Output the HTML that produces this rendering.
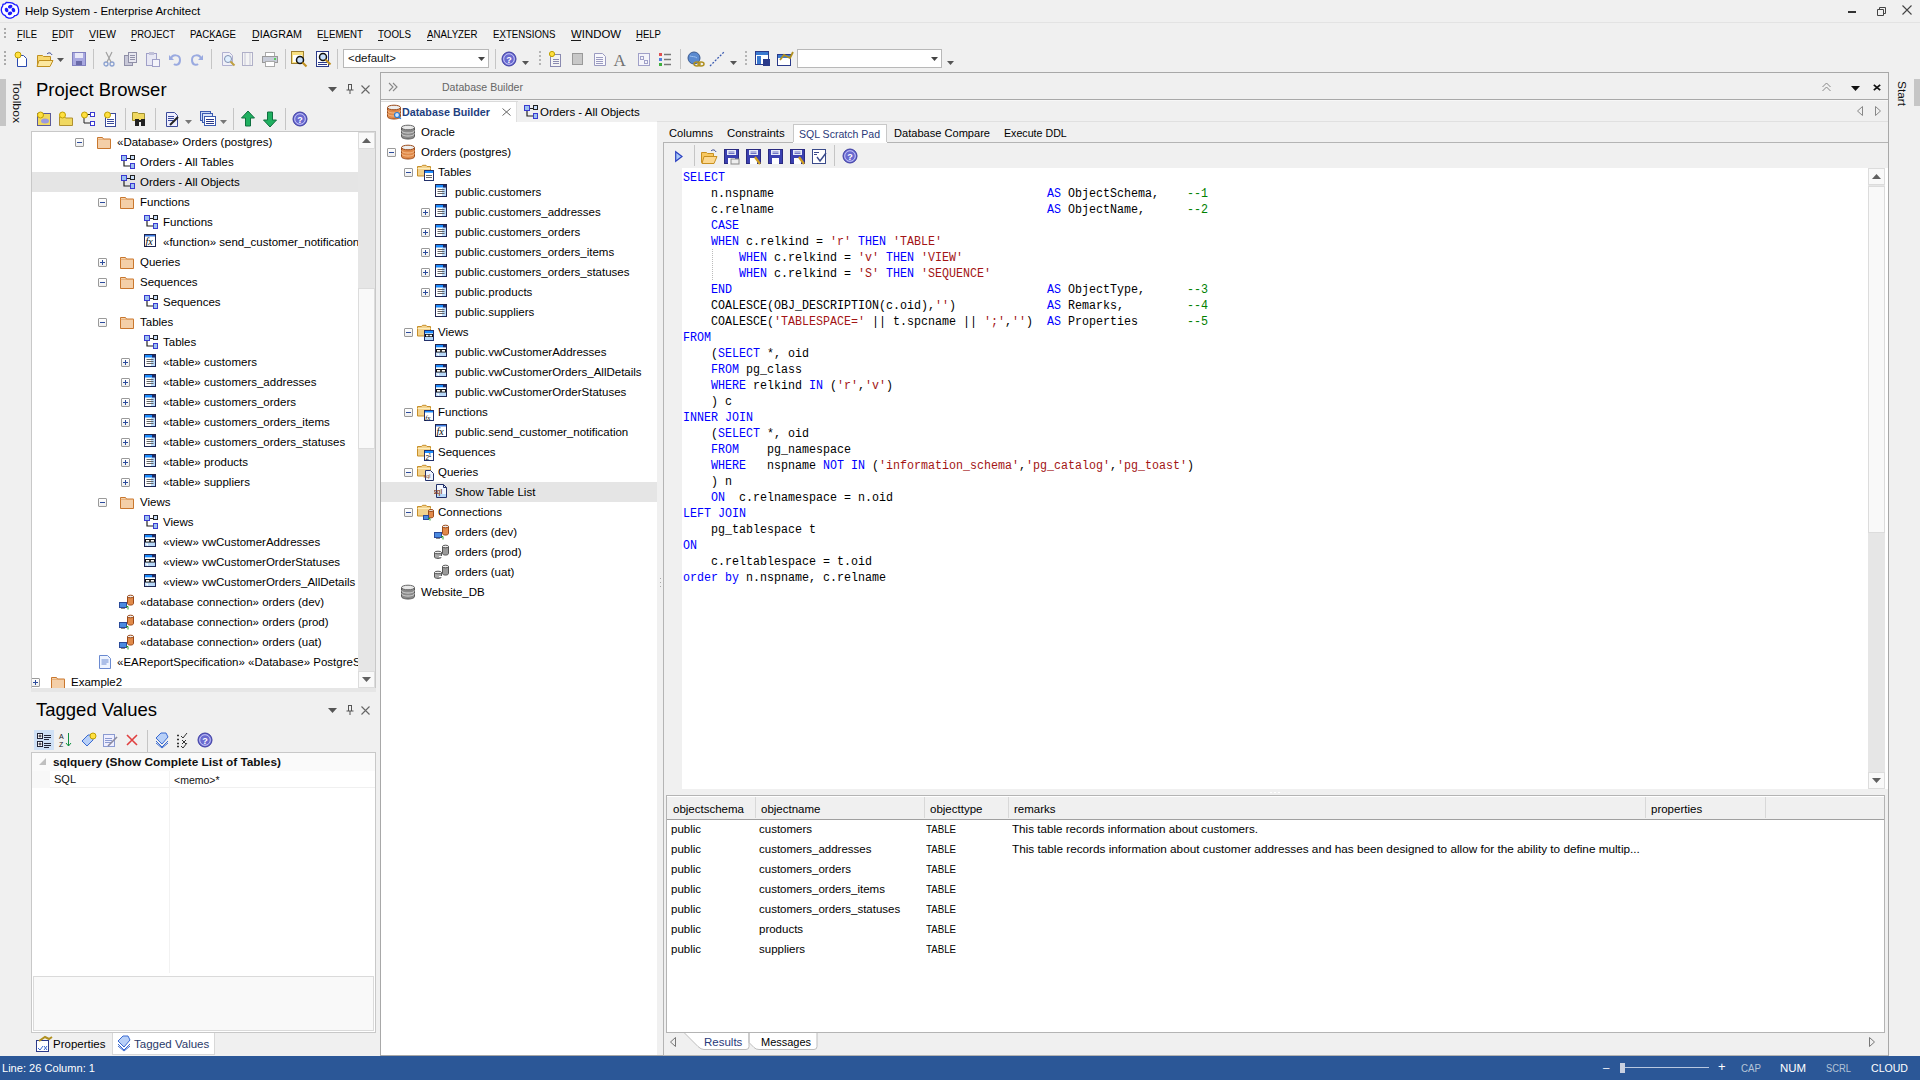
<!DOCTYPE html><html><head><meta charset="utf-8"><title>Help System - Enterprise Architect</title><style>
*{box-sizing:border-box;margin:0;padding:0}
html,body{width:1920px;height:1080px;overflow:hidden;background:#f0f0f0;font-family:"Liberation Sans",sans-serif;font-size:11.5px;color:#000}
.a{position:absolute}
.t{position:absolute;white-space:nowrap;line-height:14px}
svg.i{position:absolute;overflow:visible}
.code{position:absolute;font-family:"Liberation Mono",monospace;font-size:12.3px;line-height:16px;white-space:pre;color:#000;transform-origin:0 0;transform:scaleX(0.9485)}
.k{color:#0000ff}.s{color:#a31515}.c{color:#008000}
.ex{position:absolute;width:9px;height:9px;border:1px solid #9a9a9a;border-radius:1px;background:linear-gradient(#fff,#eee)}
.ex:before{content:"";position:absolute;left:1px;top:3px;width:5px;height:1px;background:#2c4c9c}
.ex.p:after{content:"";position:absolute;left:3px;top:1px;width:1px;height:5px;background:#2c4c9c}
</style></head><body><svg width="0" height="0" style="position:absolute">
<defs>
<symbol id="folder" viewBox="0 0 16 16"><path d="M1.5 3.5h5l1 1.5h7v9.5h-13z" fill="#f4cfa8" stroke="#c9772e"/><path d="M1.5 5.5h13" stroke="#e0a060" stroke-width="0.6"/></symbol>
<symbol id="diag" viewBox="0 0 16 16"><path d="M4 5v7h6M5 4.5h6" stroke="#222" fill="none" stroke-width="1.2"/><rect x="1.5" y="1.5" width="5" height="5" fill="#9cc0f0" stroke="#3a3ad0"/><rect x="10.5" y="1.5" width="4" height="4" fill="#c8dcf8" stroke="#222"/><rect x="10.5" y="9.5" width="4" height="5" fill="#9cc0f0" stroke="#3a3ad0"/></symbol>
<symbol id="table" viewBox="0 0 16 16"><rect x="1.5" y="0.5" width="11" height="12" fill="#fff" stroke="#1f2550"/><rect x="8" y="4" width="4" height="8" fill="#b8d8f8"/><rect x="2" y="1" width="10" height="2.5" fill="#1a8cff"/><rect x="9" y="1" width="3" height="2.5" fill="#1a2a6a"/><path d="M3.5 5.5h7M3.5 7.5h7M3.5 9.5h7" stroke="#666"/></symbol>
<symbol id="view" viewBox="0 0 16 16"><rect x="1.5" y="0.5" width="11" height="12" fill="#b8d8f8" stroke="#1f2550"/><rect x="2" y="1" width="10" height="2.5" fill="#1a8cff"/><rect x="9" y="1" width="3" height="2.5" fill="#1a2a6a"/><rect x="2" y="3.5" width="10" height="2" fill="#fff"/><rect x="2" y="5" width="10" height="3.5" fill="#111"/><rect x="3" y="6" width="3.2" height="1.6" fill="#fff"/><rect x="7.8" y="6" width="3.2" height="1.6" fill="#fff"/><path d="M2 9.5l3 2.5v-2.5z" fill="#fff"/></symbol>
<symbol id="fx" viewBox="0 0 16 16"><rect x="1.5" y="0.5" width="11" height="12" fill="#fff" stroke="#1f2550"/><rect x="2" y="1" width="10" height="1.5" fill="#3a7ae0"/><text x="2.5" y="11" font-family="Liberation Serif" font-style="italic" font-size="10" fill="#000">fx</text></symbol>
<symbol id="dbgray" viewBox="0 0 16 16"><path d="M1.5 3.5v9c0 1.5 3 2.5 6.5 2.5s6.5-1 6.5-2.5v-9" fill="#8a8a8a" stroke="#555"/><path d="M1.5 6.5c0 1.5 3 2.5 6.5 2.5s6.5-1 6.5-2.5M1.5 9.5c0 1.5 3 2.5 6.5 2.5s6.5-1 6.5-2.5" fill="none" stroke="#d8d8d8"/><ellipse cx="8" cy="3.5" rx="6.5" ry="2.3" fill="#e8e8e8" stroke="#666"/></symbol>
<symbol id="dborange" viewBox="0 0 16 16"><path d="M1.5 3.5v9c0 1.5 3 2.5 6.5 2.5s6.5-1 6.5-2.5v-9" fill="#e08a4a" stroke="#9a4a1a"/><path d="M1.5 6.5c0 1.5 3 2.5 6.5 2.5s6.5-1 6.5-2.5M1.5 9.5c0 1.5 3 2.5 6.5 2.5s6.5-1 6.5-2.5" fill="none" stroke="#f8c090"/><ellipse cx="8" cy="3.5" rx="6.5" ry="2.3" fill="#eee" stroke="#9a4a1a"/></symbol>
<symbol id="dbsearch" viewBox="0 0 16 16"><use href="#dborange"/><circle cx="11" cy="11" r="2.5" fill="#cfe6ff" stroke="#2a7ad0" stroke-width="1.2"/><path d="M12.8 12.8l2 2" stroke="#2a7ad0" stroke-width="1.5"/></symbol>
<symbol id="conn" viewBox="0 0 16 16"><path d="M8.5 2.5v7c0 1 1.6 1.6 3 1.6s3-.6 3-1.6v-7" fill="#e08a4a" stroke="#9a4a1a"/><ellipse cx="11.5" cy="2.5" rx="3" ry="1.3" fill="#eee" stroke="#9a4a1a"/><rect x="0.5" y="8.5" width="7" height="5" fill="#4a8ae0" stroke="#2a4a9a"/><path d="M2 14.5h4" stroke="#888"/><path d="M7 12.5h2v3" stroke="#2a9a2a" fill="none"/></symbol>
<symbol id="conngray" viewBox="0 0 16 16"><path d="M8.5 2.5v7c0 1 1.6 1.6 3 1.6s3-.6 3-1.6v-7" fill="#999" stroke="#555"/><ellipse cx="11.5" cy="2.5" rx="3" ry="1.3" fill="#eee" stroke="#555"/><path d="M0.5 8.5v4.5c0 .8 1.6 1.4 3.5 1.4s3.5-.6 3.5-1.4v-4.5" fill="#aaa" stroke="#555"/><ellipse cx="4" cy="8.5" rx="3.5" ry="1.3" fill="#eee" stroke="#555"/><path d="M5 12.5h3v3" stroke="#fff" fill="none"/></symbol>
<symbol id="doc" viewBox="0 0 16 16"><path d="M2.5 1.5h8l3 3v10h-11z" fill="#eef4ff" stroke="#6a8ad0"/><path d="M4.5 6h7M4.5 8h7M4.5 10h5" stroke="#6a8ad0"/></symbol>
<symbol id="fold2" viewBox="0 0 20 20"><path d="M1.5 2.5h4l1 -1.2h3.5l1 1.2h3.5v9.5h-13z" fill="#f2d28e" stroke="#c8902a"/><path d="M1.5 4.5h13" stroke="#fff4c8" stroke-width="0.8"/></symbol>
<symbol id="ov_tbl" viewBox="0 0 20 20"><rect x="8.5" y="6.5" width="9" height="10" fill="#fff" stroke="#22306a"/><rect x="9" y="7" width="8" height="2" fill="#1a8cff"/><path d="M10 11.5h6M10 13.5h6" stroke="#666"/></symbol>
<symbol id="ov_view" viewBox="0 0 20 20"><rect x="8.5" y="6.5" width="9" height="10" fill="#b8d8f8" stroke="#22306a"/><rect x="9" y="7" width="8" height="2" fill="#1a8cff"/><rect x="9" y="10" width="8" height="3" fill="#111"/><rect x="10" y="10.8" width="2.5" height="1.5" fill="#fff"/><rect x="13.5" y="10.8" width="2.5" height="1.5" fill="#fff"/></symbol>
<symbol id="ov_fx" viewBox="0 0 20 20"><rect x="8.5" y="6.5" width="9" height="10" fill="#fff" stroke="#22306a"/><rect x="9" y="7" width="8" height="1.5" fill="#1a8cff"/><text x="9.3" y="15.5" font-family="Liberation Serif" font-style="italic" font-size="7" fill="#000">fx</text></symbol>
<symbol id="ov_seq" viewBox="0 0 20 20"><rect x="8.5" y="6.5" width="9" height="10" fill="#fff" stroke="#22306a"/><rect x="9" y="7" width="8" height="2" fill="#1a8cff"/><text x="9.5" y="15.5" font-family="Liberation Sans" font-size="6.5" fill="#111">2</text><text x="12.5" y="13" font-family="Liberation Sans" font-size="5" fill="#111">1</text></symbol>
<symbol id="ov_sql" viewBox="0 0 20 20"><path d="M9.5 6.5h5l3 3v7h-8z" fill="#eef4ff" stroke="#22306a"/><text x="7.5" y="14" font-family="Liberation Sans" font-size="5.5" fill="#8a4a1a">sql</text></symbol>
<symbol id="ov_conn" viewBox="0 0 20 20"><path d="M12.5 6.5v6c0 .8 1.3 1.3 2.5 1.3s2.5-.5 2.5-1.3v-6" fill="#e08a4a" stroke="#9a4a1a"/><ellipse cx="15" cy="6.5" rx="2.5" ry="1" fill="#eee" stroke="#9a4a1a"/><rect x="7.5" y="11.5" width="5" height="4" fill="#4a8ae0" stroke="#2a4a9a"/><path d="M12 14.5h2v2" stroke="#2a9a2a" fill="none"/></symbol>
<symbol id="sqlq" viewBox="0 0 16 16"><path d="M2.5 0.5h7l3 3v10h-10z" fill="#f4f8ff" stroke="#22306a"/><path d="M9.5 0.5v3h3" fill="none" stroke="#22306a"/><rect x="3" y="10" width="9" height="3" fill="#b8d8f8"/><text x="-1" y="10" font-family="Liberation Sans" font-size="6.5" font-weight="bold" fill="#8a4a1a">sql</text></symbol>
<symbol id="help" viewBox="0 0 16 16"><circle cx="8" cy="8" r="7" fill="#6a6ad0" stroke="#3a3aa0"/><circle cx="8" cy="8" r="5.3" fill="none" stroke="#c8c8f8"/><text x="5.2" y="11.5" font-family="Liberation Sans" font-size="9" font-weight="bold" fill="#fff">?</text></symbol>
</defs></svg><svg class="i" style="left:0px;top:0px" width="22" height="22" viewBox="0 0 22 22"><path d="M10 2.6l2.6.6 2.2 1.4 1.9.5 1.2 1.9.7 2.5v2.2l-.6 2.2-1.6 1.4-1.6.4-1.6 1.6-2.3.8h-2.2l-2.4-.9-1.1-1.6-2-1-1.3-2-.6-2.4.3-2.4 1-1.6.4-1.8 2-.4 1.3-1.5z" fill="#fff" stroke="#1a1aff" stroke-width="1.3"/><g fill="#1a1aff"><ellipse cx="10.2" cy="6.6" rx="2.3" ry="1.8" transform="rotate(-20 10.2 6.6)"/><ellipse cx="13.4" cy="10" rx="1.8" ry="2.3" transform="rotate(-20 13.4 10)"/><ellipse cx="10" cy="13.4" rx="2.3" ry="1.8" transform="rotate(-20 10 13.4)"/><ellipse cx="6.6" cy="10" rx="1.8" ry="2.3" transform="rotate(-20 6.6 10)"/></g></svg><div class="t" style="left:25px;top:4px;font-size:11.5px;color:#000;">Help System - Enterprise Architect</div><div class="a" style="left:1848px;top:11px;width:8px;height:1.5px;background:#333"></div><svg class="i" style="left:1875px;top:5px" width="12" height="12"><path d="M2.5 4.5h6v6h-6zM4.5 4.5v-2h6v6h-2" fill="none" stroke="#444"/></svg><svg class="i" style="left:1902px;top:5px" width="10" height="10"><path d="M0.5 0.5l9 9M9.5 0.5l-9 9" stroke="#444" stroke-width="1.1"/></svg><div class="a" style="left:0px;top:22px;width:1920px;height:1px;background:#e3e3e3"></div><div class="a" style="left:4px;top:28px;width:2px;height:12px;background:repeating-linear-gradient(#aaa 0 2px,transparent 2px 4px)"></div><div class="t" style="left:17px;top:27px;font-size:11.5px;color:#000;transform-origin:0 0;transform:scaleX(0.824);">FILE</div><div class="a" style="left:17px;top:40px;width:5px;height:1px;background:#1a1a1a"></div><div class="t" style="left:52px;top:27px;font-size:11.5px;color:#000;transform-origin:0 0;transform:scaleX(0.840);">EDIT</div><div class="a" style="left:52px;top:40px;width:5px;height:1px;background:#1a1a1a"></div><div class="t" style="left:89px;top:27px;font-size:11.5px;color:#000;transform-origin:0 0;transform:scaleX(0.919);">VIEW</div><div class="a" style="left:89px;top:40px;width:6px;height:1px;background:#1a1a1a"></div><div class="t" style="left:131px;top:27px;font-size:11.5px;color:#000;transform-origin:0 0;transform:scaleX(0.820);">PROJECT</div><div class="a" style="left:131px;top:40px;width:5px;height:1px;background:#1a1a1a"></div><div class="t" style="left:190px;top:27px;font-size:11.5px;color:#000;transform-origin:0 0;transform:scaleX(0.840);">PACKAGE</div><div class="a" style="left:209px;top:40px;width:5px;height:1px;background:#1a1a1a"></div><div class="t" style="left:252px;top:27px;font-size:11.5px;color:#000;transform-origin:0 0;transform:scaleX(0.932);">DIAGRAM</div><div class="a" style="left:252px;top:40px;width:7px;height:1px;background:#1a1a1a"></div><div class="t" style="left:317px;top:27px;font-size:11.5px;color:#000;transform-origin:0 0;transform:scaleX(0.847);">ELEMENT</div><div class="a" style="left:323px;top:40px;width:5px;height:1px;background:#1a1a1a"></div><div class="t" style="left:378px;top:27px;font-size:11.5px;color:#000;transform-origin:0 0;transform:scaleX(0.851);">TOOLS</div><div class="a" style="left:378px;top:40px;width:5px;height:1px;background:#1a1a1a"></div><div class="t" style="left:427px;top:27px;font-size:11.5px;color:#000;transform-origin:0 0;transform:scaleX(0.844);">ANALYZER</div><div class="a" style="left:427px;top:40px;width:5px;height:1px;background:#1a1a1a"></div><div class="t" style="left:493px;top:27px;font-size:11.5px;color:#000;transform-origin:0 0;transform:scaleX(0.843);">EXTENSIONS</div><div class="a" style="left:499px;top:40px;width:5px;height:1px;background:#1a1a1a"></div><div class="t" style="left:571px;top:27px;font-size:11.5px;color:#000;transform-origin:0 0;transform:scaleX(0.991);">WINDOW</div><div class="a" style="left:571px;top:40px;width:10px;height:1px;background:#1a1a1a"></div><div class="t" style="left:636px;top:27px;font-size:11.5px;color:#000;transform-origin:0 0;transform:scaleX(0.832);">HELP</div><div class="a" style="left:636px;top:40px;width:6px;height:1px;background:#1a1a1a"></div><div class="a" style="left:4px;top:51px;width:2px;height:16px;background:repeating-linear-gradient(#aaa 0 2px,transparent 2px 4px)"></div><svg class="i" style="left:13px;top:51px" width="16" height="16" viewBox="0 0 16 16"><path d="M4.5 4.5h6l3 3v8h-9z" fill="#fff" stroke="#2a4ab0"/><circle cx="5" cy="4" r="3" fill="#ffe040" stroke="#c0a000"/></svg><svg class="i" style="left:36px;top:51px" width="18" height="16" viewBox="0 0 18 16"><path d="M1.5 4.5h5l1 1h7v9h-13z" fill="#f8d870" stroke="#c09020"/><path d="M3 9.5h14l-3 6h-13z" fill="#fce8a0" stroke="#c09020"/><path d="M11 3c2-2 4-1 5 1" stroke="#2a3a8a" fill="none"/></svg><svg class="i" style="left:57px;top:58px" width="7" height="4" viewBox="0 0 7 4"><path d="M0 0h7l-3.5 4z" fill="#555"/></svg><svg class="i" style="left:71px;top:51px" width="16" height="16" viewBox="0 0 16 16"><rect x="1.5" y="1.5" width="13" height="13" fill="#a8a8e0" stroke="#8080c0"/><rect x="4" y="2" width="8" height="5" fill="#e8e8f8"/><rect x="5" y="10" width="6" height="4" fill="#6a6aa8"/></svg><div class="a" style="left:93px;top:49px;width:1px;height:20px;background:#c5c5c5"></div><svg class="i" style="left:103px;top:51px" width="12" height="16" viewBox="0 0 12 16"><circle cx="3" cy="13" r="2" fill="none" stroke="#8aa0d0" stroke-width="1.3"/><circle cx="9" cy="13" r="2" fill="none" stroke="#8aa0d0" stroke-width="1.3"/><path d="M4 11l5-10M8 11l-5-10" stroke="#a0a0a0" stroke-width="1.2"/></svg><svg class="i" style="left:123px;top:51px" width="15" height="16" viewBox="0 0 15 16"><rect x="1.5" y="4.5" width="8" height="10" fill="#c8c8d8" stroke="#9090a8"/><rect x="5.5" y="1.5" width="8" height="10" fill="#e8e8f0" stroke="#9090a8"/><path d="M7 4.5h5M7 6.5h5M7 8.5h5" stroke="#9090a8"/></svg><svg class="i" style="left:145px;top:51px" width="16" height="16" viewBox="0 0 16 16"><rect x="1.5" y="2.5" width="10" height="12" fill="#e8e8f4" stroke="#a0a0c8"/><rect x="4" y="1" width="5" height="3" fill="#c0c0d8"/><rect x="7.5" y="8.5" width="7" height="7" fill="#f4f4fa" stroke="#a0a0c8"/></svg><svg class="i" style="left:168px;top:51px" width="14" height="16" viewBox="0 0 14 16"><path d="M3 8c1-5 9-5 9 1s-5 5-6 4" fill="none" stroke="#9aaae0" stroke-width="2"/><path d="M1 4v5h5z" fill="#9aaae0"/></svg><svg class="i" style="left:190px;top:51px" width="14" height="16" viewBox="0 0 14 16"><path d="M11 8c-1-5-9-5-9 1s5 5 6 4" fill="none" stroke="#9aaae0" stroke-width="2"/><path d="M13 4v5h-5z" fill="#9aaae0"/></svg><div class="a" style="left:211px;top:49px;width:1px;height:20px;background:#c5c5c5"></div><svg class="i" style="left:220px;top:51px" width="16" height="16" viewBox="0 0 16 16"><path d="M2.5 1.5h7l3 3v10h-10z" fill="#f0f0f8" stroke="#b0b0d0"/><circle cx="8" cy="8" r="3.5" fill="#e0f0ff" stroke="#8090b0"/><path d="M10.5 10.5l4 4" stroke="#c0a040" stroke-width="2"/></svg><svg class="i" style="left:241px;top:51px" width="13" height="16" viewBox="0 0 13 16"><rect x="1.5" y="1.5" width="10" height="13" fill="#f4f4f4" stroke="#b0b0c8"/><path d="M4 2v12M9 2v12" stroke="#c8c8d8"/></svg><svg class="i" style="left:261px;top:51px" width="18" height="16" viewBox="0 0 18 16"><rect x="4.5" y="1.5" width="9" height="5" fill="#fff" stroke="#aaa"/><rect x="1.5" y="5.5" width="15" height="6" fill="#c8ccd8" stroke="#999"/><rect x="4.5" y="10.5" width="9" height="5" fill="#fff" stroke="#aaa"/><circle cx="14" cy="8" r="1" fill="#3c3"/></svg><div class="a" style="left:285px;top:49px;width:1px;height:20px;background:#c5c5c5"></div><svg class="i" style="left:291px;top:51px" width="17" height="16" viewBox="0 0 17 16"><rect x="0.5" y="0.5" width="12" height="12" fill="#f8e080" stroke="#a08030"/><rect x="2" y="4" width="9" height="7" fill="#fff"/><circle cx="9" cy="9" r="3.5" fill="#c8e0ff" stroke="#111" stroke-width="1.5"/><path d="M11.5 11.5l4 4" stroke="#c09020" stroke-width="2.2"/></svg><svg class="i" style="left:316px;top:51px" width="16" height="16" viewBox="0 0 16 16"><rect x="0.5" y="0.5" width="12" height="15" fill="#fff" stroke="#2a3a8a"/><path d="M2 11.5h9M2 13.5h9" stroke="#2a3a8a"/><circle cx="7" cy="6" r="3.5" fill="#c8e0ff" stroke="#111" stroke-width="1.5"/><path d="M9.5 8.5l5 5" stroke="#c09020" stroke-width="2.2"/></svg><div class="a" style="left:337px;top:49px;width:1px;height:20px;background:#c5c5c5"></div><div class="a" style="left:343px;top:49px;width:146px;height:19px;background:#fff;border:1px solid #b8b8b8"></div><div class="t" style="left:348px;top:51px;font-size:11.5px;color:#111;">&lt;default&gt;</div><svg class="i" style="left:478px;top:57px" width="7" height="4" viewBox="0 0 7 4"><path d="M0 0h7l-3.5 4z" fill="#444"/></svg><div class="a" style="left:495px;top:49px;width:1px;height:20px;background:#c5c5c5"></div><svg class="i" style="left:501px;top:51px" width="16" height="16"><use href="#help"/></svg><svg class="i" style="left:522px;top:61px" width="7" height="4" viewBox="0 0 7 4"><path d="M0 0h7l-3.5 4z" fill="#555"/></svg><div class="a" style="left:539px;top:51px;width:2px;height:16px;background:repeating-linear-gradient(#b5b5b5 0 2px,transparent 2px 4px)"></div><svg class="i" style="left:548px;top:51px" width="14" height="16" viewBox="0 0 14 16"><rect x="2.5" y="3.5" width="10" height="12" fill="#f4f4f4" stroke="#8a8ab0"/><path d="M5 8.5h6M5 10.5h6M5 12.5h6" stroke="#8a8ab0"/><circle cx="4" cy="3" r="2.6" fill="#ffe040" stroke="#c0a000"/></svg><svg class="i" style="left:571px;top:51px" width="13" height="16" viewBox="0 0 13 16"><rect x="1.5" y="2.5" width="10" height="11" fill="#c8c8c8" stroke="#999"/></svg><svg class="i" style="left:593px;top:51px" width="14" height="16" viewBox="0 0 14 16"><path d="M1.5 2.5h8l3 3v9h-11z" fill="#f8f8fc" stroke="#9a9ac0"/><path d="M3 6.5h7M3 8.5h7M3 10.5h7M3 12.5h7" stroke="#9a9ac0"/></svg><svg class="i" style="left:613px;top:51px" width="16" height="16" viewBox="0 0 16 16"><text x="0.5" y="14.5" font-family="Liberation Serif" font-size="17" fill="#707070">A</text></svg><svg class="i" style="left:637px;top:51px" width="14" height="16" viewBox="0 0 14 16"><rect x="1.5" y="2.5" width="11" height="12" fill="#f4f4fa" stroke="#a0a0c8"/><rect x="3.5" y="5.5" width="3" height="3" fill="none" stroke="#a0a0c8"/><rect x="7.5" y="9.5" width="3" height="3" fill="none" stroke="#a0a0c8"/></svg><svg class="i" style="left:658px;top:51px" width="14" height="16" viewBox="0 0 14 16"><rect x="1" y="2" width="3" height="3" fill="#e05050"/><rect x="1" y="7" width="3" height="3" fill="#5080e0"/><rect x="1" y="12" width="3" height="3" fill="#40b040"/><path d="M6 3.5h7M6 8.5h7M6 13.5h7" stroke="#777" stroke-width="1.5"/></svg><div class="a" style="left:680px;top:49px;width:1px;height:20px;background:#c5c5c5"></div><svg class="i" style="left:687px;top:51px" width="17" height="16" viewBox="0 0 17 16"><circle cx="7" cy="7" r="6" fill="#5a8ad0" stroke="#3a5a90"/><path d="M3 5c2 1 5 0 7 2" stroke="#9ac0f0" fill="none"/><ellipse cx="10" cy="13" rx="3" ry="2" fill="none" stroke="#b09020" stroke-width="1.5"/><ellipse cx="14" cy="13" rx="3" ry="2" fill="none" stroke="#b09020" stroke-width="1.5"/></svg><svg class="i" style="left:709px;top:51px" width="16" height="16" viewBox="0 0 16 16"><path d="M1 15L15 1" stroke="#3a5ab0" stroke-width="1.3" stroke-dasharray="2 1.5"/></svg><svg class="i" style="left:730px;top:61px" width="7" height="4" viewBox="0 0 7 4"><path d="M0 0h7l-3.5 4z" fill="#555"/></svg><div class="a" style="left:745px;top:51px;width:2px;height:16px;background:repeating-linear-gradient(#b5b5b5 0 2px,transparent 2px 4px)"></div><svg class="i" style="left:755px;top:51px" width="16" height="16" viewBox="0 0 16 16"><rect x="0.5" y="0.5" width="13" height="13" fill="#fff" stroke="#2a3a8a"/><rect x="1" y="1" width="12" height="3" fill="#3a7ad0"/><rect x="2" y="5" width="4" height="8" fill="#3a7ad0"/><rect x="8" y="8" width="7" height="7" fill="#2a3a8a"/></svg><svg class="i" style="left:777px;top:51px" width="17" height="16" viewBox="0 0 17 16"><rect x="0.5" y="3.5" width="13" height="11" fill="#fff" stroke="#2a3a8a"/><rect x="1" y="4" width="12" height="3" fill="#3a7ad0"/><path d="M3 9l4-5 6 3 3-6" stroke="#b09020" stroke-width="1.8" fill="none"/></svg><div class="a" style="left:797px;top:49px;width:145px;height:19px;background:#fff;border:1px solid #b8b8b8"></div><svg class="i" style="left:931px;top:57px" width="7" height="4" viewBox="0 0 7 4"><path d="M0 0h7l-3.5 4z" fill="#444"/></svg><svg class="i" style="left:947px;top:61px" width="7" height="4" viewBox="0 0 7 4"><path d="M0 0h7l-3.5 4z" fill="#555"/></svg><div class="a" style="left:0px;top:79px;width:6px;height:47px;background:#c6c6c6"></div><div class="t" style="left:10px;top:81px;transform-origin:0 0;transform:translate(14px,0) rotate(90deg) scaleX(1.060);font-size:11.5px;color:#111">Toolbox</div><div class="t" style="left:36px;top:80px;font-size:18.5px;line-height:20px;color:#000;">Project Browser</div><svg class="i" style="left:328px;top:87px" width="9" height="5" viewBox="0 0 9 5"><path d="M0 0h9l-4.5 5z" fill="#555"/></svg><svg class="i" style="left:346px;top:84px" width="8" height="10" viewBox="0 0 8 10"><path d="M2 0.5h4M2.5 1v5M5.5 1v5M0.5 6h7M4 6v4" stroke="#555" fill="none"/></svg><svg class="i" style="left:361px;top:85px" width="9" height="9" viewBox="0 0 9 9"><path d="M0.5 0.5l8 8M8.5 0.5l-8 8" stroke="#666" stroke-width="1.1"/></svg><svg class="i" style="left:36px;top:111px" width="16" height="16" viewBox="0 0 16 16"><rect x="1.5" y="2.5" width="13" height="12" fill="#f0d860" stroke="#5a5a9a"/><ellipse cx="9" cy="10" rx="4" ry="2.5" fill="#9a9ae0"/><circle cx="4.5" cy="4" r="3" fill="#ffe040" stroke="#c0a000"/></svg><svg class="i" style="left:58px;top:111px" width="16" height="16" viewBox="0 0 16 16"><path d="M1.5 5.5h5l1 1.5h7v7.5h-13z" fill="#f0d860" stroke="#b09030"/><circle cx="4.5" cy="4" r="3" fill="#ffe040" stroke="#c0a000"/></svg><svg class="i" style="left:80px;top:111px" width="16" height="16" viewBox="0 0 16 16"><path d="M4 5v7h7M7 3.5h4" stroke="#222" fill="none"/><rect x="10.5" y="1.5" width="4" height="4" fill="#fff" stroke="#3a3ad0"/><rect x="10.5" y="10.5" width="4" height="4" fill="#fff" stroke="#3a3ad0"/><circle cx="4.5" cy="4" r="3" fill="#ffe040" stroke="#c0a000"/></svg><svg class="i" style="left:103px;top:111px" width="14" height="16" viewBox="0 0 14 16"><rect x="2.5" y="2.5" width="10" height="13" fill="#fff" stroke="#3a4a9a"/><path d="M4 8.5h7M4 10.5h7M4 12.5h7" stroke="#3a4a9a" stroke-width="1.2"/><circle cx="4.5" cy="4" r="3" fill="#ffe040" stroke="#c0a000"/></svg><div class="a" style="left:125px;top:108px;width:1px;height:22px;background:#c5c5c5"></div><svg class="i" style="left:132px;top:111px" width="16" height="16" viewBox="0 0 16 16"><path d="M0.5 1.5h5l1 1h6v7h-12z" fill="#f0d860" stroke="#a09030"/><rect x="3" y="8" width="4" height="7" fill="#222"/><rect x="9" y="8" width="4" height="7" fill="#222"/><rect x="6" y="9" width="4" height="2" fill="#222"/></svg><div class="a" style="left:155px;top:108px;width:1px;height:22px;background:#c5c5c5"></div><svg class="i" style="left:165px;top:111px" width="15" height="16" viewBox="0 0 15 16"><path d="M1.5 1.5h8l3 3v11h-11z" fill="#eef" stroke="#3a4a9a"/><path d="M3 5.5h6M3 7.5h6M3 9.5h5" stroke="#3a4a9a"/><path d="M5 14l8-8" stroke="#222" stroke-width="2"/></svg><svg class="i" style="left:185px;top:120px" width="7" height="4" viewBox="0 0 7 4"><path d="M0 0h7l-3.5 4z" fill="#777"/></svg><svg class="i" style="left:200px;top:111px" width="16" height="16" viewBox="0 0 16 16"><rect x="0.5" y="0.5" width="10" height="9" fill="#c8d8f8" stroke="#3a5ab0"/><rect x="2.5" y="2.5" width="10" height="9" fill="#d8e4f8" stroke="#3a5ab0"/><rect x="4.5" y="5.5" width="11" height="9" fill="#fff" stroke="#3a5ab0"/><path d="M6 8.5h8M6 10.5h8M6 12.5h8" stroke="#2a3a8a" stroke-width="1.2"/></svg><svg class="i" style="left:220px;top:120px" width="7" height="4" viewBox="0 0 7 4"><path d="M0 0h7l-3.5 4z" fill="#777"/></svg><div class="a" style="left:233px;top:108px;width:1px;height:22px;background:#c5c5c5"></div><svg class="i" style="left:241px;top:111px" width="14" height="16" viewBox="0 0 14 16"><path d="M7 0l6.5 7h-4v8h-5v-8h-4z" fill="#20b060" stroke="#107040"/></svg><svg class="i" style="left:263px;top:111px" width="14" height="16" viewBox="0 0 14 16"><path d="M7 16l6.5-7h-4v-8h-5v8h-4z" fill="#20b060" stroke="#107040"/></svg><div class="a" style="left:285px;top:108px;width:1px;height:22px;background:#c5c5c5"></div><svg class="i" style="left:292px;top:111px" width="16" height="16"><use href="#help"/></svg><div class="a" style="left:31px;top:131px;width:345px;height:558px;background:#fff;border:1px solid #c8c8c8"></div><div class="a" style="left:32px;top:172px;width:326px;height:20px;background:#e5e5e5"></div><div class="a" style="left:358px;top:132px;width:17px;height:556px;background:#e6e6e6"></div><div class="a" style="left:358px;top:132px;width:17px;height:17px;background:#f9f9f9;border:1px solid #dcdcdc"></div><svg class="i" style="left:362px;top:138px" width="9" height="5" viewBox="0 0 9 5"><path d="M0 5l4.5-5 4.5 5z" fill="#606060"/></svg><div class="a" style="left:358px;top:288px;width:17px;height:161px;background:#f9f9f9;border:1px solid #dcdcdc"></div><div class="a" style="left:358px;top:671px;width:17px;height:17px;background:#f9f9f9;border:1px solid #dcdcdc"></div><svg class="i" style="left:362px;top:677px" width="9" height="5" viewBox="0 0 9 5"><path d="M0 0h9l-4.5 5z" fill="#606060"/></svg><div class="a" style="left:31px;top:688px;width:345px;height:4px;background:#e6e6e6"></div><div class="a" style="left:32px;top:132px;width:326px;height:556px;overflow:hidden"><div class="ex" style="left:43px;top:6px"></div><svg class="i" style="left:64px;top:2px" width="16" height="16"><use href="#folder"/></svg><div class="t" style="left:85px;top:3px;font-size:11.5px;color:#000;">«Database» Orders (postgres)</div><svg class="i" style="left:88px;top:22px" width="16" height="16"><use href="#diag"/></svg><div class="t" style="left:108px;top:23px;font-size:11.5px;color:#000;">Orders - All Tables</div><svg class="i" style="left:88px;top:42px" width="16" height="16"><use href="#diag"/></svg><div class="t" style="left:108px;top:43px;font-size:11.5px;color:#000;">Orders - All Objects</div><div class="ex" style="left:66px;top:66px"></div><svg class="i" style="left:87px;top:62px" width="16" height="16"><use href="#folder"/></svg><div class="t" style="left:108px;top:63px;font-size:11.5px;color:#000;">Functions</div><svg class="i" style="left:111px;top:82px" width="16" height="16"><use href="#diag"/></svg><div class="t" style="left:131px;top:83px;font-size:11.5px;color:#000;">Functions</div><svg class="i" style="left:111px;top:102px" width="16" height="16"><use href="#fx"/></svg><div class="t" style="left:131px;top:103px;font-size:11.5px;color:#000;">«function» send_customer_notification</div><div class="ex p" style="left:66px;top:126px"></div><svg class="i" style="left:87px;top:122px" width="16" height="16"><use href="#folder"/></svg><div class="t" style="left:108px;top:123px;font-size:11.5px;color:#000;">Queries</div><div class="ex" style="left:66px;top:146px"></div><svg class="i" style="left:87px;top:142px" width="16" height="16"><use href="#folder"/></svg><div class="t" style="left:108px;top:143px;font-size:11.5px;color:#000;">Sequences</div><svg class="i" style="left:111px;top:162px" width="16" height="16"><use href="#diag"/></svg><div class="t" style="left:131px;top:163px;font-size:11.5px;color:#000;">Sequences</div><div class="ex" style="left:66px;top:186px"></div><svg class="i" style="left:87px;top:182px" width="16" height="16"><use href="#folder"/></svg><div class="t" style="left:108px;top:183px;font-size:11.5px;color:#000;">Tables</div><svg class="i" style="left:111px;top:202px" width="16" height="16"><use href="#diag"/></svg><div class="t" style="left:131px;top:203px;font-size:11.5px;color:#000;">Tables</div><div class="ex p" style="left:89px;top:226px"></div><svg class="i" style="left:111px;top:222px" width="16" height="16"><use href="#table"/></svg><div class="t" style="left:131px;top:223px;font-size:11.5px;color:#000;">«table» customers</div><div class="ex p" style="left:89px;top:246px"></div><svg class="i" style="left:111px;top:242px" width="16" height="16"><use href="#table"/></svg><div class="t" style="left:131px;top:243px;font-size:11.5px;color:#000;">«table» customers_addresses</div><div class="ex p" style="left:89px;top:266px"></div><svg class="i" style="left:111px;top:262px" width="16" height="16"><use href="#table"/></svg><div class="t" style="left:131px;top:263px;font-size:11.5px;color:#000;">«table» customers_orders</div><div class="ex p" style="left:89px;top:286px"></div><svg class="i" style="left:111px;top:282px" width="16" height="16"><use href="#table"/></svg><div class="t" style="left:131px;top:283px;font-size:11.5px;color:#000;">«table» customers_orders_items</div><div class="ex p" style="left:89px;top:306px"></div><svg class="i" style="left:111px;top:302px" width="16" height="16"><use href="#table"/></svg><div class="t" style="left:131px;top:303px;font-size:11.5px;color:#000;">«table» customers_orders_statuses</div><div class="ex p" style="left:89px;top:326px"></div><svg class="i" style="left:111px;top:322px" width="16" height="16"><use href="#table"/></svg><div class="t" style="left:131px;top:323px;font-size:11.5px;color:#000;">«table» products</div><div class="ex p" style="left:89px;top:346px"></div><svg class="i" style="left:111px;top:342px" width="16" height="16"><use href="#table"/></svg><div class="t" style="left:131px;top:343px;font-size:11.5px;color:#000;">«table» suppliers</div><div class="ex" style="left:66px;top:366px"></div><svg class="i" style="left:87px;top:362px" width="16" height="16"><use href="#folder"/></svg><div class="t" style="left:108px;top:363px;font-size:11.5px;color:#000;">Views</div><svg class="i" style="left:111px;top:382px" width="16" height="16"><use href="#diag"/></svg><div class="t" style="left:131px;top:383px;font-size:11.5px;color:#000;">Views</div><svg class="i" style="left:111px;top:402px" width="16" height="16"><use href="#view"/></svg><div class="t" style="left:131px;top:403px;font-size:11.5px;color:#000;">«view» vwCustomerAddresses</div><svg class="i" style="left:111px;top:422px" width="16" height="16"><use href="#view"/></svg><div class="t" style="left:131px;top:423px;font-size:11.5px;color:#000;">«view» vwCustomerOrderStatuses</div><svg class="i" style="left:111px;top:442px" width="16" height="16"><use href="#view"/></svg><div class="t" style="left:131px;top:443px;font-size:11.5px;color:#000;">«view» vwCustomerOrders_AllDetails</div><svg class="i" style="left:87px;top:462px" width="16" height="16"><use href="#conn"/></svg><div class="t" style="left:108px;top:463px;font-size:11.5px;color:#000;">«database connection» orders (dev)</div><svg class="i" style="left:87px;top:482px" width="16" height="16"><use href="#conn"/></svg><div class="t" style="left:108px;top:483px;font-size:11.5px;color:#000;">«database connection» orders (prod)</div><svg class="i" style="left:87px;top:502px" width="16" height="16"><use href="#conn"/></svg><div class="t" style="left:108px;top:503px;font-size:11.5px;color:#000;">«database connection» orders (uat)</div><svg class="i" style="left:65px;top:522px" width="16" height="16"><use href="#doc"/></svg><div class="t" style="left:85px;top:523px;font-size:11.5px;color:#000;">«EAReportSpecification» «Database» PostgreSQL</div><div class="ex p" style="left:-1px;top:546px"></div><svg class="i" style="left:18px;top:542px" width="16" height="16"><use href="#folder"/></svg><div class="t" style="left:39px;top:543px;font-size:11.5px;color:#000;">Example2</div></div><div class="t" style="left:36px;top:700px;font-size:18.5px;line-height:20px;color:#000;">Tagged Values</div><svg class="i" style="left:328px;top:708px" width="9" height="5" viewBox="0 0 9 5"><path d="M0 0h9l-4.5 5z" fill="#555"/></svg><svg class="i" style="left:346px;top:705px" width="8" height="10" viewBox="0 0 8 10"><path d="M2 0.5h4M2.5 1v5M5.5 1v5M0.5 6h7M4 6v4" stroke="#555" fill="none"/></svg><svg class="i" style="left:361px;top:706px" width="9" height="9" viewBox="0 0 9 9"><path d="M0.5 0.5l8 8M8.5 0.5l-8 8" stroke="#666" stroke-width="1.1"/></svg><div class="a" style="left:34px;top:730px;width:20px;height:20px;background:#cfe0f5"></div><svg class="i" style="left:37px;top:732px" width="15" height="16" viewBox="0 0 15 16"><rect x="0.5" y="1.5" width="5" height="5" fill="#fff" stroke="#223"/><rect x="0.5" y="9.5" width="5" height="5" fill="#fff" stroke="#223"/><path d="M3 2.5v3M1.5 4h3M3 10.5v3M1.5 12h3" stroke="#223"/><path d="M7 3.5h7M7 5.5h7M7 11.5h7M7 13.5h7M7 7.5h5M7 15.5h5" stroke="#223"/></svg><svg class="i" style="left:59px;top:732px" width="13" height="16" viewBox="0 0 13 16"><text x="0" y="7" font-family="Liberation Sans" font-size="7" fill="#222">A</text><text x="0" y="15" font-family="Liberation Sans" font-size="7" fill="#222">Z</text><path d="M9.5 1v13M7 11l2.5 3 2.5-3" stroke="#109040" fill="none"/></svg><svg class="i" style="left:81px;top:732px" width="16" height="16" viewBox="0 0 16 16"><path d="M1 9l6-6h5v5l-6 6z" fill="#b8d0f8" stroke="#3a6ad0"/><circle cx="12" cy="4" r="3" fill="#ffe040" stroke="#c0a000"/></svg><svg class="i" style="left:102px;top:732px" width="16" height="16" viewBox="0 0 16 16"><rect x="1.5" y="2.5" width="11" height="12" fill="#eef" stroke="#8a9ad0"/><path d="M3 6.5h7M3 8.5h7M3 10.5h6" stroke="#8a9ad0"/><path d="M6 14l9-9" stroke="#8a8aa0" stroke-width="1.6"/></svg><svg class="i" style="left:125px;top:732px" width="14" height="16" viewBox="0 0 14 16"><path d="M2 3l10 10M12 3l-10 10" stroke="#e04040" stroke-width="1.6"/></svg><div class="a" style="left:147px;top:730px;width:1px;height:22px;background:#c5c5c5"></div><svg class="i" style="left:155px;top:732px" width="15" height="16" viewBox="0 0 15 16"><path d="M1 6l5-5h5l2 4-6 7z" fill="#b8d0f8" stroke="#3a6ad0"/><path d="M1 9l6 6 6-6M1 11l6 5 6-5" fill="none" stroke="#3a6ad0"/></svg><svg class="i" style="left:176px;top:732px" width="14" height="16" viewBox="0 0 14 16"><path d="M1 3.5h2M1 7.5h2M1 11.5h2M1 14.5h2" stroke="#333" stroke-width="1.5"/><path d="M5 4l2 2 4-5M6 8l4 4M10 8l-4 4M5 14l2 2 4-5" stroke="#333" fill="none"/></svg><svg class="i" style="left:197px;top:732px" width="16" height="16"><use href="#help"/></svg><div class="a" style="left:31px;top:752px;width:345px;height:281px;background:#fff;border:1px solid #c8c8c8"></div><div class="a" style="left:32px;top:753px;width:343px;height:18px;background:#fafafa"></div><svg class="i" style="left:38px;top:757px" width="9" height="9" viewBox="0 0 9 9"><path d="M8 1v7h-7z" fill="#c0c0c0"/></svg><div class="t" style="left:53px;top:755px;font-size:11.5px;font-weight:bold;color:#111;transform-origin:0 0;transform:scaleX(1.029);">sqlquery (Show Complete List of Tables)</div><div class="a" style="left:32px;top:771px;width:18px;height:17px;background:#f8f8f8"></div><div class="a" style="left:50px;top:787px;width:325px;height:1px;background:#f0f0f0"></div><div class="a" style="left:169px;top:771px;width:1px;height:202px;background:#f2f2f2"></div><div class="t" style="left:54px;top:772px;font-size:11px;color:#111;">SQL</div><div class="t" style="left:174px;top:773px;font-size:10.5px;color:#111;">&lt;memo&gt;*</div><div class="a" style="left:33px;top:976px;width:341px;height:55px;background:#f9f9f9;border:1px solid #dadada"></div><div class="a" style="left:112px;top:1033px;width:103px;height:22px;background:#fff;border:1px solid #d8d8d8;border-top:none"></div><svg class="i" style="left:35px;top:1036px" width="17" height="16" viewBox="0 0 17 16"><rect x="1.5" y="4.5" width="12" height="11" fill="#fff" stroke="#2a3a8a"/><path d="M3 12l2 2 3-4M9 10l3 4M12 10l-3 4" stroke="#3a6ad0" fill="none"/><path d="M4 5l6-4 4 2 3-2" stroke="#b09020" stroke-width="2" fill="none"/></svg><div class="t" style="left:53px;top:1037px;font-size:11.5px;color:#000;">Properties</div><svg class="i" style="left:117px;top:1035px" width="15" height="17" viewBox="0 0 15 17"><path d="M1 6l5-5h5l2 4-6 7z" fill="#b8d0f8" stroke="#3a6ad0"/><path d="M1 9l6 6 6-6M1 11l6 5 6-5" fill="none" stroke="#3a6ad0"/></svg><div class="t" style="left:134px;top:1037px;font-size:11.5px;color:#2a3a6a;">Tagged Values</div><div class="a" style="left:380px;top:72px;width:1509px;height:984px;border:1px solid #a8a8a8;background:#f0f0f0"></div><div class="a" style="left:381px;top:99px;width:1507px;height:1px;background:#a8a8a8"></div><svg class="i" style="left:388px;top:82px" width="11" height="10" viewBox="0 0 11 10"><path d="M1 1l4 4-4 4M5 1l4 4-4 4" stroke="#888" fill="none" stroke-width="1.1"/></svg><div class="t" style="left:442px;top:80px;font-size:11.5px;color:#666;transform-origin:0 0;transform:scaleX(0.918);">Database Builder</div><svg class="i" style="left:1822px;top:82px" width="9" height="10" viewBox="0 0 9 10"><path d="M0.5 5l4-4 4 4M0.5 9l4-4 4 4" stroke="#888" fill="none"/></svg><svg class="i" style="left:1851px;top:86px" width="9" height="5" viewBox="0 0 9 5"><path d="M0 0h9l-4.5 5z" fill="#111"/></svg><svg class="i" style="left:1873px;top:84px" width="8" height="7" viewBox="0 0 8 7"><path d="M0.8 0.8l6.4 5.4M7.2 0.8l-6.4 5.4" stroke="#111" stroke-width="1.7"/></svg><div class="a" style="left:657px;top:121px;width:1231px;height:1px;background:#e0e0e0"></div><div class="a" style="left:381px;top:100px;width:1507px;height:1px;background:#f7f7f7"></div><div class="a" style="left:381px;top:101px;width:137px;height:1px;background:#dadada"></div><svg class="i" style="left:1857px;top:106px" width="6" height="10" viewBox="0 0 6 10"><path d="M5.5 0.5v9l-5-4.5z" fill="none" stroke="#888"/></svg><svg class="i" style="left:1875px;top:106px" width="6" height="10" viewBox="0 0 6 10"><path d="M0.5 0.5v9l5-4.5z" fill="none" stroke="#888"/></svg><div class="a" style="left:381px;top:102px;width:136px;height:20px;background:#fff;border-right:1px solid #e0e0e0"></div><svg class="i" style="left:386px;top:104px" width="16" height="16"><use href="#dbsearch"/></svg><div class="t" style="left:402px;top:105px;font-size:11.5px;color:#1f3f80;font-weight:bold;transform-origin:0 0;transform:scaleX(0.937);">Database Builder</div><svg class="i" style="left:502px;top:108px" width="9" height="8" viewBox="0 0 9 8"><path d="M0.5 0.5l8 7M8.5 0.5l-8 7" stroke="#666" stroke-width="1"/></svg><svg class="i" style="left:523px;top:104px" width="16" height="16"><use href="#diag"/></svg><div class="t" style="left:540px;top:105px;font-size:11.5px;color:#000;">Orders - All Objects</div><div class="a" style="left:381px;top:122px;width:276px;height:933px;background:#fff"></div><div class="a" style="left:381px;top:482px;width:276px;height:20px;background:#e5e5e5"></div><svg class="i" style="left:400px;top:124px" width="16" height="16"><use href="#dbgray"/></svg><div class="t" style="left:421px;top:125px;font-size:11.5px;color:#000;">Oracle</div><div class="ex" style="left:387px;top:148px"></div><svg class="i" style="left:400px;top:144px" width="16" height="16"><use href="#dborange"/></svg><div class="t" style="left:421px;top:145px;font-size:11.5px;color:#000;">Orders (postgres)</div><div class="ex" style="left:404px;top:168px"></div><svg class="i" style="left:416px;top:164px" width="20" height="20" viewBox="0 0 20 20"><use href="#fold2"/><use href="#ov_tbl"/></svg><div class="t" style="left:438px;top:165px;font-size:11.5px;color:#000;">Tables</div><svg class="i" style="left:434px;top:184px" width="16" height="16"><use href="#table"/></svg><div class="t" style="left:455px;top:185px;font-size:11.5px;color:#000;">public.customers</div><div class="ex p" style="left:421px;top:208px"></div><svg class="i" style="left:434px;top:204px" width="16" height="16"><use href="#table"/></svg><div class="t" style="left:455px;top:205px;font-size:11.5px;color:#000;">public.customers_addresses</div><div class="ex p" style="left:421px;top:228px"></div><svg class="i" style="left:434px;top:224px" width="16" height="16"><use href="#table"/></svg><div class="t" style="left:455px;top:225px;font-size:11.5px;color:#000;">public.customers_orders</div><div class="ex p" style="left:421px;top:248px"></div><svg class="i" style="left:434px;top:244px" width="16" height="16"><use href="#table"/></svg><div class="t" style="left:455px;top:245px;font-size:11.5px;color:#000;">public.customers_orders_items</div><div class="ex p" style="left:421px;top:268px"></div><svg class="i" style="left:434px;top:264px" width="16" height="16"><use href="#table"/></svg><div class="t" style="left:455px;top:265px;font-size:11.5px;color:#000;">public.customers_orders_statuses</div><div class="ex p" style="left:421px;top:288px"></div><svg class="i" style="left:434px;top:284px" width="16" height="16"><use href="#table"/></svg><div class="t" style="left:455px;top:285px;font-size:11.5px;color:#000;">public.products</div><svg class="i" style="left:434px;top:304px" width="16" height="16"><use href="#table"/></svg><div class="t" style="left:455px;top:305px;font-size:11.5px;color:#000;">public.suppliers</div><div class="ex" style="left:404px;top:328px"></div><svg class="i" style="left:416px;top:324px" width="20" height="20" viewBox="0 0 20 20"><use href="#fold2"/><use href="#ov_view"/></svg><div class="t" style="left:438px;top:325px;font-size:11.5px;color:#000;">Views</div><svg class="i" style="left:434px;top:344px" width="16" height="16"><use href="#view"/></svg><div class="t" style="left:455px;top:345px;font-size:11.5px;color:#000;">public.vwCustomerAddresses</div><svg class="i" style="left:434px;top:364px" width="16" height="16"><use href="#view"/></svg><div class="t" style="left:455px;top:365px;font-size:11.5px;color:#000;">public.vwCustomerOrders_AllDetails</div><svg class="i" style="left:434px;top:384px" width="16" height="16"><use href="#view"/></svg><div class="t" style="left:455px;top:385px;font-size:11.5px;color:#000;">public.vwCustomerOrderStatuses</div><div class="ex" style="left:404px;top:408px"></div><svg class="i" style="left:416px;top:404px" width="20" height="20" viewBox="0 0 20 20"><use href="#fold2"/><use href="#ov_fx"/></svg><div class="t" style="left:438px;top:405px;font-size:11.5px;color:#000;">Functions</div><svg class="i" style="left:434px;top:424px" width="16" height="16"><use href="#fx"/></svg><div class="t" style="left:455px;top:425px;font-size:11.5px;color:#000;">public.send_customer_notification</div><svg class="i" style="left:416px;top:444px" width="20" height="20" viewBox="0 0 20 20"><use href="#fold2"/><use href="#ov_seq"/></svg><div class="t" style="left:438px;top:445px;font-size:11.5px;color:#000;">Sequences</div><div class="ex" style="left:404px;top:468px"></div><svg class="i" style="left:416px;top:464px" width="20" height="20" viewBox="0 0 20 20"><use href="#fold2"/><use href="#ov_sql"/></svg><div class="t" style="left:438px;top:465px;font-size:11.5px;color:#000;">Queries</div><svg class="i" style="left:434px;top:484px" width="16" height="16"><use href="#sqlq"/></svg><div class="t" style="left:455px;top:485px;font-size:11.5px;color:#000;">Show Table List</div><div class="ex" style="left:404px;top:508px"></div><svg class="i" style="left:416px;top:504px" width="20" height="20" viewBox="0 0 20 20"><use href="#fold2"/><use href="#ov_conn"/></svg><div class="t" style="left:438px;top:505px;font-size:11.5px;color:#000;">Connections</div><svg class="i" style="left:434px;top:524px" width="16" height="16"><use href="#conn"/></svg><div class="t" style="left:455px;top:525px;font-size:11.5px;color:#000;">orders (dev)</div><svg class="i" style="left:434px;top:544px" width="16" height="16"><use href="#conngray"/></svg><div class="t" style="left:455px;top:545px;font-size:11.5px;color:#000;">orders (prod)</div><svg class="i" style="left:434px;top:564px" width="16" height="16"><use href="#conngray"/></svg><div class="t" style="left:455px;top:565px;font-size:11.5px;color:#000;">orders (uat)</div><svg class="i" style="left:400px;top:584px" width="16" height="16"><use href="#dbgray"/></svg><div class="t" style="left:421px;top:585px;font-size:11.5px;color:#000;">Website_DB</div><svg class="i" style="left:659px;top:578px" width="3" height="10" viewBox="0 0 3 10"><path d="M1.5 0v1M1.5 4v1M1.5 8v1" stroke="#aaa"/></svg><div class="t" style="left:669px;top:126px;font-size:11.5px;color:#000;transform-origin:0 0;transform:scaleX(0.970);">Columns</div><div class="t" style="left:727px;top:126px;font-size:11.5px;color:#000;transform-origin:0 0;transform:scaleX(0.992);">Constraints</div><div class="t" style="left:894px;top:126px;font-size:11.5px;color:#000;transform-origin:0 0;transform:scaleX(0.963);">Database Compare</div><div class="t" style="left:1004px;top:126px;font-size:11.5px;color:#000;transform-origin:0 0;transform:scaleX(0.926);">Execute DDL</div><div class="a" style="left:793px;top:124px;width:94px;height:19px;background:#fff;border:1px solid #c8c8c8;border-bottom:none"></div><div class="t" style="left:799px;top:127px;font-size:11.5px;color:#2a3a7a;transform-origin:0 0;transform:scaleX(0.916);">SQL Scratch Pad</div><div class="a" style="left:663px;top:142px;width:1226px;height:914px;border:1px solid #b4b4b4;border-right:none;background:#f0f0f0"></div><div class="a" style="left:793px;top:142px;width:94px;height:1px;background:#fff"></div><svg class="i" style="left:675px;top:151px" width="8" height="11" viewBox="0 0 8 11"><path d="M0.7 0.7v9.6l6.3-4.8z" fill="#a8c8f8" stroke="#2a40c0" stroke-width="1.2"/></svg><div class="a" style="left:694px;top:145px;width:1px;height:21px;background:#c5c5c5"></div><svg class="i" style="left:701px;top:149px" width="17" height="15" viewBox="0 0 17 15"><path d="M0.5 3.5h5l1 1h6v9h-12z" fill="#f8c860" stroke="#c89020"/><path d="M3 7.5h13l-3 7h-12z" fill="#fcd890" stroke="#c89020"/><path d="M10 2c2-2 4-1 5 1" stroke="#2a3a8a" fill="none"/></svg><svg class="i" style="left:724px;top:149px" width="16" height="15" viewBox="0 0 16 15"><rect x="0.5" y="0.5" width="14" height="14" fill="#3a40b0" stroke="#2a2a80"/><rect x="3" y="1" width="9" height="5" fill="#e8ecf8"/><path d="M4.5 3h6M4.5 4.5h6" stroke="#3a40b0" stroke-width="0.7"/><rect x="4" y="9" width="7" height="6" fill="#fff"/><rect x="7" y="10" width="8" height="5" fill="#eee" stroke="#888"/></svg><svg class="i" style="left:746px;top:149px" width="16" height="15" viewBox="0 0 16 15"><rect x="0.5" y="0.5" width="14" height="14" fill="#3a40b0" stroke="#2a2a80"/><rect x="3" y="1" width="9" height="5" fill="#e8ecf8"/><path d="M4.5 3h6M4.5 4.5h6" stroke="#3a40b0" stroke-width="0.7"/><rect x="4" y="9" width="7" height="6" fill="#fff"/><path d="M9 8l5 7" stroke="#d0a020" stroke-width="2.2"/></svg><svg class="i" style="left:768px;top:149px" width="16" height="15" viewBox="0 0 16 15"><rect x="0.5" y="0.5" width="14" height="14" fill="#3a40b0" stroke="#2a2a80"/><rect x="3" y="1" width="9" height="5" fill="#e8ecf8"/><path d="M4.5 3h6M4.5 4.5h6" stroke="#3a40b0" stroke-width="0.7"/><rect x="4" y="9" width="7" height="6" fill="#fff"/></svg><svg class="i" style="left:790px;top:149px" width="16" height="15" viewBox="0 0 16 15"><rect x="0.5" y="0.5" width="14" height="14" fill="#3a40b0" stroke="#2a2a80"/><rect x="3" y="1" width="9" height="5" fill="#e8ecf8"/><path d="M4.5 3h6M4.5 4.5h6" stroke="#3a40b0" stroke-width="0.7"/><rect x="4" y="9" width="7" height="6" fill="#fff"/><path d="M9 8l5 7" stroke="#d0a020" stroke-width="2.2"/></svg><svg class="i" style="left:812px;top:149px" width="15" height="15" viewBox="0 0 15 15"><rect x="0.5" y="0.5" width="13" height="14" fill="#fff" stroke="#3a4a8a"/><path d="M2 3.5h5M2 5.5h3" stroke="#3a4a8a"/><path d="M5 8l3 4 6-8" stroke="#3a4a8a" fill="none" stroke-width="1.4"/></svg><div class="a" style="left:834px;top:145px;width:1px;height:21px;background:#c5c5c5"></div><svg class="i" style="left:842px;top:148px" width="16" height="16"><use href="#help"/></svg><div class="a" style="left:665px;top:168px;width:17px;height:621px;background:#f0f0f0"></div><div class="a" style="left:682px;top:168px;width:1206px;height:621px;background:#fff"></div><div class="a" style="left:1868px;top:168px;width:17px;height:621px;background:#e6e6e6"></div><div class="a" style="left:1868px;top:168px;width:17px;height:17px;background:#f9f9f9;border:1px solid #dcdcdc"></div><svg class="i" style="left:1872px;top:174px" width="9" height="5" viewBox="0 0 9 5"><path d="M0 5l4.5-5 4.5 5z" fill="#606060"/></svg><div class="a" style="left:1868px;top:186px;width:17px;height:347px;background:#f9f9f9;border:1px solid #dcdcdc"></div><div class="a" style="left:1868px;top:772px;width:17px;height:17px;background:#f9f9f9;border:1px solid #dcdcdc"></div><svg class="i" style="left:1872px;top:778px" width="9" height="5" viewBox="0 0 9 5"><path d="M0 0h9l-4.5 5z" fill="#606060"/></svg><div class="code" style="left:683px;top:170px"><span class="k">SELECT</span>
    n.nspname                                       <span class="k">AS</span> ObjectSchema,    <span class="c">--1</span>
    c.relname                                       <span class="k">AS</span> ObjectName,      <span class="c">--2</span>
    <span class="k">CASE</span>
    <span class="k">WHEN</span> c.relkind = <span class="s">&#x27;r&#x27;</span> <span class="k">THEN</span> <span class="s">&#x27;TABLE&#x27;</span>
        <span class="k">WHEN</span> c.relkind = <span class="s">&#x27;v&#x27;</span> <span class="k">THEN</span> <span class="s">&#x27;VIEW&#x27;</span>
        <span class="k">WHEN</span> c.relkind = <span class="s">&#x27;S&#x27;</span> <span class="k">THEN</span> <span class="s">&#x27;SEQUENCE&#x27;</span>
    <span class="k">END</span>                                             <span class="k">AS</span> ObjectType,      <span class="c">--3</span>
    COALESCE(OBJ_DESCRIPTION(c.oid),<span class="s">&#x27;&#x27;</span>)             <span class="k">AS</span> Remarks,         <span class="c">--4</span>
    COALESCE(<span class="s">&#x27;TABLESPACE=&#x27;</span> || t.spcname || <span class="s">&#x27;;&#x27;</span>,<span class="s">&#x27;&#x27;</span>)  <span class="k">AS</span> Properties       <span class="c">--5</span>
<span class="k">FROM</span>
    (<span class="k">SELECT</span> *, oid
    <span class="k">FROM</span> pg_class
    <span class="k">WHERE</span> relkind <span class="k">IN</span> (<span class="s">&#x27;r&#x27;</span>,<span class="s">&#x27;v&#x27;</span>)
    ) c
<span class="k">INNER</span> <span class="k">JOIN</span>
    (<span class="k">SELECT</span> *, oid
    <span class="k">FROM</span>    pg_namespace
    <span class="k">WHERE</span>   nspname <span class="k">NOT</span> <span class="k">IN</span> (<span class="s">&#x27;information_schema&#x27;</span>,<span class="s">&#x27;pg_catalog&#x27;</span>,<span class="s">&#x27;pg_toast&#x27;</span>)
    ) n
    <span class="k">ON</span>  c.relnamespace = n.oid
<span class="k">LEFT</span> <span class="k">JOIN</span>
    pg_tablespace t
<span class="k">ON</span>
    c.reltablespace = t.oid
<span class="k">order</span> <span class="k">by</span> n.nspname, c.relname</div><div class="a" style="left:712px;top:249px;width:1px;height:32px;background:repeating-linear-gradient(#bbb 0 1px,transparent 1px 2px)"></div><div class="a" style="left:666px;top:795px;width:1219px;height:238px;background:#fff;border:1px solid #b4b4b4"></div><div class="a" style="left:667px;top:796px;width:1217px;height:24px;background:#f0f0f0;border-top:1px solid #fff;border-bottom:1px solid #a0a0a0"></div><div class="a" style="left:755px;top:797px;width:1px;height:21px;background:#d8d8d8"></div><div class="a" style="left:924px;top:797px;width:1px;height:21px;background:#d8d8d8"></div><div class="a" style="left:1008px;top:797px;width:1px;height:21px;background:#d8d8d8"></div><div class="a" style="left:1645px;top:797px;width:1px;height:21px;background:#d8d8d8"></div><div class="a" style="left:1765px;top:797px;width:1px;height:21px;background:#d8d8d8"></div><div class="t" style="left:673px;top:802px;font-size:11.5px;color:#000;">objectschema</div><div class="t" style="left:761px;top:802px;font-size:11.5px;color:#000;">objectname</div><div class="t" style="left:930px;top:802px;font-size:11.5px;color:#000;">objecttype</div><div class="t" style="left:1014px;top:802px;font-size:11.5px;color:#000;">remarks</div><div class="t" style="left:1651px;top:802px;font-size:11.5px;color:#000;">properties</div><div class="t" style="left:671px;top:822px;font-size:11.5px;color:#000;">public</div><div class="t" style="left:759px;top:822px;font-size:11.5px;color:#000;">customers</div><div class="t" style="left:926px;top:822px;font-size:11.5px;color:#000;transform-origin:0 0;transform:scaleX(0.843);">TABLE</div><div class="t" style="left:1012px;top:822px;font-size:11.5px;color:#000;transform-origin:0 0;transform:scaleX(1.013);">This table records information about customers.</div><div class="t" style="left:671px;top:842px;font-size:11.5px;color:#000;">public</div><div class="t" style="left:759px;top:842px;font-size:11.5px;color:#000;">customers_addresses</div><div class="t" style="left:926px;top:842px;font-size:11.5px;color:#000;transform-origin:0 0;transform:scaleX(0.843);">TABLE</div><div class="t" style="left:1012px;top:842px;font-size:11.5px;color:#000;transform-origin:0 0;transform:scaleX(1.022);">This table records information about customer addresses and has been designed to allow for the ability to define multip...</div><div class="t" style="left:671px;top:862px;font-size:11.5px;color:#000;">public</div><div class="t" style="left:759px;top:862px;font-size:11.5px;color:#000;">customers_orders</div><div class="t" style="left:926px;top:862px;font-size:11.5px;color:#000;transform-origin:0 0;transform:scaleX(0.843);">TABLE</div><div class="t" style="left:671px;top:882px;font-size:11.5px;color:#000;">public</div><div class="t" style="left:759px;top:882px;font-size:11.5px;color:#000;">customers_orders_items</div><div class="t" style="left:926px;top:882px;font-size:11.5px;color:#000;transform-origin:0 0;transform:scaleX(0.843);">TABLE</div><div class="t" style="left:671px;top:902px;font-size:11.5px;color:#000;">public</div><div class="t" style="left:759px;top:902px;font-size:11.5px;color:#000;">customers_orders_statuses</div><div class="t" style="left:926px;top:902px;font-size:11.5px;color:#000;transform-origin:0 0;transform:scaleX(0.843);">TABLE</div><div class="t" style="left:671px;top:922px;font-size:11.5px;color:#000;">public</div><div class="t" style="left:759px;top:922px;font-size:11.5px;color:#000;">products</div><div class="t" style="left:926px;top:922px;font-size:11.5px;color:#000;transform-origin:0 0;transform:scaleX(0.843);">TABLE</div><div class="t" style="left:671px;top:942px;font-size:11.5px;color:#000;">public</div><div class="t" style="left:759px;top:942px;font-size:11.5px;color:#000;">suppliers</div><div class="t" style="left:926px;top:942px;font-size:11.5px;color:#000;transform-origin:0 0;transform:scaleX(0.843);">TABLE</div><svg class="i" style="left:1270px;top:791px" width="11" height="3" viewBox="0 0 11 3"><path d="M0 1.5h2M4 1.5h2M8 1.5h2" stroke="#fff"/></svg><svg class="i" style="left:670px;top:1037px" width="6" height="10" viewBox="0 0 6 10"><path d="M5.5 0.5v9l-5-4.5z" fill="none" stroke="#777"/></svg><svg class="i" style="left:684px;top:1032px" width="136" height="18" viewBox="0 0 136 18"><path d="M0 0.5l14 14q3 3 6 3h42q3 0 3-3v-14.5M65 0.5v10l5 5q2 2 5 2h55q3 0 3-3v-14.5" fill="#fff" stroke="#bdbdbd"/></svg><div class="a" style="left:666px;top:1032px;width:1219px;height:1px;background:#b4b4b4"></div><div class="t" style="left:704px;top:1035px;font-size:11.5px;color:#2a3a7a;">Results</div><div class="t" style="left:761px;top:1035px;font-size:11.5px;color:#000;transform-origin:0 0;transform:scaleX(0.954);">Messages</div><svg class="i" style="left:1869px;top:1037px" width="6" height="10" viewBox="0 0 6 10"><path d="M0.5 0.5v9l5-4.5z" fill="none" stroke="#777"/></svg><div class="a" style="left:1888px;top:72px;width:1px;height:984px;background:#a8a8a8"></div><div class="a" style="left:1914px;top:79px;width:6px;height:27px;background:#c6c6c6"></div><div class="t" style="left:1895px;top:81px;transform-origin:0 0;transform:translate(14px,0) rotate(90deg) scaleX(1.029);font-size:11.5px;color:#111">Start</div><div class="a" style="left:0px;top:1056px;width:1920px;height:24px;background:#2b5797"></div><div class="t" style="left:2px;top:1061px;font-size:11.5px;color:#fff;transform-origin:0 0;transform:scaleX(0.963);">Line: 26 Column: 1</div><div class="t" style="left:1603px;top:1060px;font-size:11.5px;color:#fff;">–</div><div class="a" style="left:1621px;top:1067px;width:88px;height:1px;background:#b8c8e0"></div><div class="a" style="left:1620px;top:1063px;width:5px;height:10px;background:#c8d0e0"></div><div class="t" style="left:1718px;top:1060px;font-size:13px;color:#fff;">+</div><div class="t" style="left:1741px;top:1061px;font-size:11.5px;color:#b4c4d8;transform-origin:0 0;transform:scaleX(0.846);">CAP</div><div class="t" style="left:1780px;top:1061px;font-size:11.5px;color:#fff;transform-origin:0 0;transform:scaleX(0.993);">NUM</div><div class="t" style="left:1826px;top:1061px;font-size:11.5px;color:#b4c4d8;transform-origin:0 0;transform:scaleX(0.815);">SCRL</div><div class="t" style="left:1871px;top:1061px;font-size:11.5px;color:#fff;transform-origin:0 0;transform:scaleX(0.919);">CLOUD</div></body></html>
